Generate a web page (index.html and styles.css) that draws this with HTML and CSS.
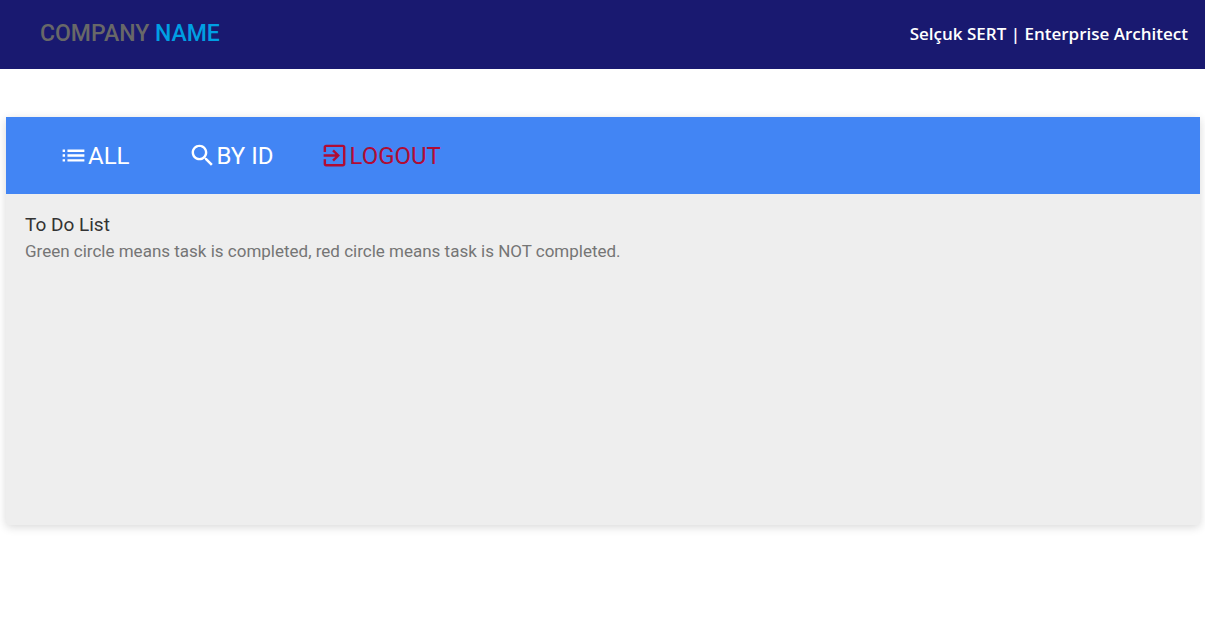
FILE: index.html
```html
<!DOCTYPE html>
<html lang="en">
<head>
<meta charset="utf-8">
<meta name="viewport" content="width=device-width, initial-scale=1">
<title>To Do List</title>
<link rel="stylesheet" href="styles.css">
</head>
<body>
<header class="header">
  <div class="logo">COMPANY <span class="logo-accent">NAME</span></div>
  <div class="user">Selçuk SERT | Enterprise Architect</div>
</header>
<main class="card">
  <nav class="nav">
    <a class="nav-link" href="#all">
      <svg class="icon" viewBox="0 0 24 24" aria-hidden="true"><path d="M3 13h2v-2H3v2zm0 4h2v-2H3v2zm0-8h2V7H3v2zm4 4h14v-2H7v2zm0 4h14v-2H7v2zM7 7v2h14V7H7z"/></svg>
      <span>ALL</span>
    </a>
    <a class="nav-link" href="#by-id">
      <svg class="icon" viewBox="0 0 24 24" aria-hidden="true"><path d="M15.5 14h-.79l-.28-.27C15.41 12.59 16 11.11 16 9.5 16 5.91 13.09 3 9.5 3S3 5.91 3 9.5 5.91 16 9.5 16c1.61 0 3.09-.59 4.23-1.57l.27.28v.79l5 4.99L20.49 19l-4.99-5zm-6 0C7.01 14 5 11.99 5 9.5S7.01 5 9.5 5 14 7.01 14 9.5 11.99 14 9.5 14z"/></svg>
      <span>BY ID</span>
    </a>
    <button class="nav-link nav-logout" type="button">
      <svg class="icon" viewBox="0 0 24 24" aria-hidden="true"><path d="M10.09 15.59L11.5 17l5-5-5-5-1.41 1.41L12.67 11H3v2h9.67l-2.58 2.59zM19 3H5c-1.11 0-2 .9-2 2v4h2V5h14v14H5v-4H3v4c0 1.1.89 2 2 2h14c1.1 0 2-.9 2-2V5c0-1.1-.9-2-2-2z"/></svg>
      <span>LOGOUT</span>
    </button>
  </nav>
  <section class="content">
    <h1 class="title">To Do List</h1>
    <p class="subtitle">Green circle means task is completed, red circle means task is NOT completed.</p>
  </section>
</main>
</body>
</html>
```
FILE: styles.css
```css
* {
  box-sizing: border-box;
}

body {
  margin: 0;
  background: #fff;
  font-family: Roboto, "Liberation Sans", sans-serif;
}

.header {
  display: flex;
  align-items: center;
  justify-content: space-between;
  padding: 16px 17px 17px 40px;
  background: #191970;
}

.logo {
  color: #686868;
  font: 500 23px/36px Roboto, "Liberation Sans", sans-serif;
}

.logo-accent {
  color: #009fe3;
}

.user {
  color: #fff;
  font: 600 17px/36px "Open Sans", "Noto Sans", sans-serif;
}

.card {
  min-height: 408px;
  margin: 48px 5px 24px 6px;
  border-radius: 4px;
  background: #eee;
  box-shadow: 0 2px 10px rgba(0, 0, 0, 0.16);
}

.nav {
  display: flex;
  flex-wrap: wrap;
  padding: 24px 53px 22px;
  gap: 20px 58px;
  background: #4285f4;
}

.nav-link {
  display: flex;
  align-items: flex-start;
  padding: 0;
  border: 0;
  background: none;
  color: #fff;
  font: 400 24px/31px Roboto, "Liberation Sans", sans-serif;
  text-decoration: none;
}

.nav-logout {
  margin-left: -11px;
  color: #b00c34;
  cursor: pointer;
}

.icon {
  width: 29px;
  height: 29px;
  fill: currentColor;
}

.content {
  padding: 17px 19px;
}

.title {
  margin: 0;
  color: #333;
  font-size: 19px;
  font-weight: 400;
  line-height: 28px;
}

.subtitle {
  margin: 0;
  color: #757575;
  font-size: 17px;
  line-height: 24px;
}
```
